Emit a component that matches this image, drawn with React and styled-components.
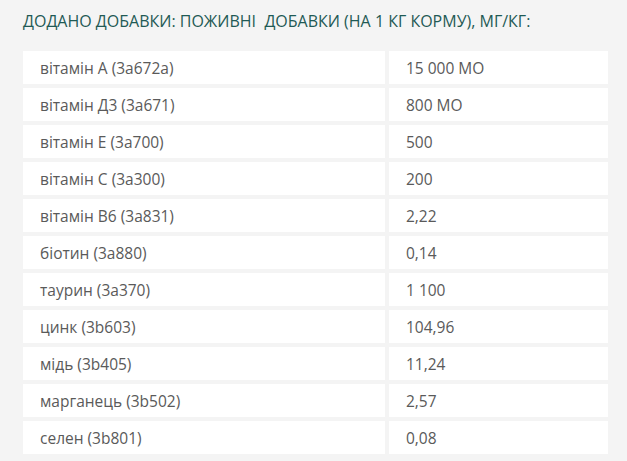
import React from "react"
import styled, { createGlobalStyle } from "styled-components"

const GlobalStyle = createGlobalStyle`
  html, body {
    margin: 0;
    padding: 0;
    background: #f4f4f4;
  }
  body {
    font-family: "Open Sans", "Liberation Sans", sans-serif;
  }
`

const Wrap = styled.div`
  padding: 9px 15px 0 19px;
  width: 593px;
`

const Title = styled.h3`
  margin: 0 0 14px 4px;
  font-size: 16px;
  font-weight: 400;
  line-height: 24px;
  color: #1f5a55;
  text-transform: uppercase;
  white-space: pre;
`

const Table = styled.table`
  width: 593px;
  border-collapse: separate;
  border-spacing: 4px;
  table-layout: fixed;
`

const Cell = styled.td`
  background: #fff;
  height: 33px;
  padding: 0 17px;
  font-size: 15.5px;
  color: #5a5a5a;
  box-sizing: border-box;
`

const rows = [
  ['вітамін А (3а672а)', '15 000 МО'],
  ['вітамін Д3 (3а671)', '800 МО'],
  ['вітамін Е (3а700)', '500'],
  ['вітамін С (3а300)', '200'],
  ['вітамін В6 (3а831)', '2,22'],
  ['біотин (3а880)', '0,14'],
  ['таурин (3а370)', '1 100'],
  ['цинк (3b603)', '104,96'],
  ['мідь (3b405)', '11,24'],
  ['марганець (3b502)', '2,57'],
  ['селен (3b801)', '0,08'],
]

export default function App() {
  return (
    <React.Fragment>
      <GlobalStyle />
      <Wrap>
        <Title>{'Додано добавки: поживні  добавки (на 1 кг корму), мг/кг:'}</Title>
        <Table>
          <colgroup>
            <col style={{ width: '362px' }} />
            <col />
          </colgroup>
          <tbody>
            {rows.map((r, i) => (
              <tr key={i}>
                <Cell>{r[0]}</Cell>
                <Cell>{r[1]}</Cell>
              </tr>
            ))}
          </tbody>
        </Table>
      </Wrap>
    </React.Fragment>
  )
}
